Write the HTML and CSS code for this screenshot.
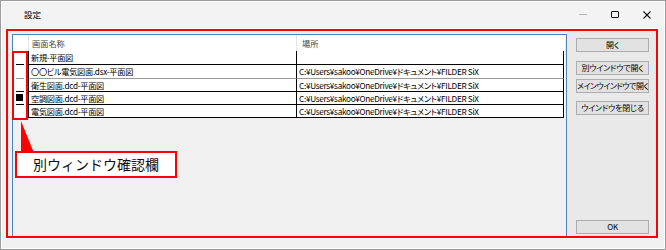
FILE: index.html
```html
<!DOCTYPE html>
<html lang="ja">
<head>
    <meta charset="UTF-8">
    <title>設定</title>
    <link rel="stylesheet" href="styles.css">
</head>
<body>

    <div class="window">
        <!-- Title bar -->
        <div class="titlebar">
            <span class="title">設定</span>
            <div class="controls">
                <span class="ctl min"></span>
                <span class="ctl max"></span>
                <svg class="ctl close" width="8" height="8" viewBox="0 0 8 8">
                    <path d="M0.5 0.5 L7.5 7.5 M7.5 0.5 L0.5 7.5" stroke="#111" stroke-width="1.1" fill="none"/>
                </svg>
            </div>
        </div>

        <!-- Dialog body (red annotation frame) -->
        <div class="frame">
            <div class="list">
                <div class="row head">
                    <div class="cell ind"></div>
                    <div class="cell">画面名称</div>
                    <div class="cell">場所</div>
                </div>
                <div class="row tall">
                    <div class="cell ind"><span class="dash"></span></div>
                    <div class="cell">新規-平面図</div>
                    <div class="cell"></div>
                </div>
                <div class="row tall soft">
                    <div class="cell ind"><span class="dash grey"></span></div>
                    <div class="cell">〇〇ビル電気図面.dsx-平面図</div>
                    <div class="cell">C:¥Users¥sakoo¥OneDrive¥ドキュメント¥FILDER SiX</div>
                </div>
                <div class="row">
                    <div class="cell ind"><span class="dash"></span></div>
                    <div class="cell">衛生図面.dcd-平面図</div>
                    <div class="cell">C:¥Users¥sakoo¥OneDrive¥ドキュメント¥FILDER SiX</div>
                </div>
                <div class="row">
                    <div class="cell ind"><span class="box"></span><span class="dash"></span></div>
                    <div class="cell">空調図面.dcd-平面図</div>
                    <div class="cell">C:¥Users¥sakoo¥OneDrive¥ドキュメント¥FILDER SiX</div>
                </div>
                <div class="row">
                    <div class="cell ind"></div>
                    <div class="cell">電気図面.dcd-平面図</div>
                    <div class="cell">C:¥Users¥sakoo¥OneDrive¥ドキュメント¥FILDER SiX</div>
                </div>
            </div>

            <div class="side">
                <button class="btn b1">開く</button>
                <button class="btn b2">別ウインドウで開く</button>
                <button class="btn b3">メインウインドウで開く</button>
                <button class="btn b4">ウインドウを閉じる</button>
                <button class="btn ok">OK</button>
            </div>
        </div>

        <!-- Annotations -->
        <div class="mark"></div>
        <svg class="pointer" width="14" height="32" viewBox="0 0 14 32">
            <polygon points="0,0 0,32 13,32" fill="#ff0000"/>
        </svg>
        <div class="callout">別ウィンドウ確認欄</div>
    </div>

</body>
</html>
```

FILE: styles.css
```css
* {
    margin: 0;
    padding: 0;
    box-sizing: border-box;
}

body {
    font-family: "Noto Sans CJK JP", "Noto Sans", sans-serif;
    background: #fff;
    color: #000;
}

.window {
    position: relative;
    width: 666px;
    height: 250px;
    background: #f0f0f0;
    border: 1px solid #9c9c9c;
    box-shadow: inset 1px 1px 0 #fff, inset -1px -1px 0 #fff;
    display: flex;
    flex-direction: column;
}

/* title bar */
.titlebar {
    height: 25px;
    display: flex;
    align-items: center;
    padding-left: 22px;
    background: #f3f3f3;
    margin: 1px 1px 0 1px;
}

.title {
    font-size: 8.5px;
    line-height: 1;
}

.controls {
    margin-left: auto;
    display: flex;
    align-items: center;
    gap: 24px;
    padding-right: 13px;
}

.ctl {
    display: block;
}

.min {
    width: 8px;
    height: 1px;
    background: #b5b5b5;
}

.max {
    width: 8px;
    height: 7px;
    border: 1px solid #111;
    border-radius: 1px;
}

/* red frame around the dialog body */
.frame {
    display: flex;
    margin: 2px 7px 0 5px;
    height: 209px;
    border: 2px solid #ff0000;
    outline: 1px solid #fff;
}

.list {
    width: 555px;
    margin: 3px 0 0 4px;
    border: 1px solid #4a84b8;
    border-bottom: none;
    background: #f0f0f0;
}

.row {
    display: grid;
    grid-template-columns: 15px 268px 268px;
    width: 552px;
    height: 13px;
    font-size: 8.2px;
    line-height: 12px;
    font-feature-settings: "palt";
    letter-spacing: -0.3px;
    background: #fff;
}

.row.tall {
    height: 14px;
}

.row .cell {
    border-left: 1px solid #000;
    border-bottom: 1px solid #000;
    padding-left: 2px;
    white-space: nowrap;
    overflow: hidden;
}

.row .cell:last-child {
    border-right: 1px solid #000;
}

.row.soft .cell {
    border-bottom-color: #9a9a9a;
}

/* indicator column: short tick on each row line */
.row .cell.ind {
    border: none;
    padding: 0 0 0 3px;
    display: flex;
    flex-direction: column;
    justify-content: flex-end;
    position: relative;
    background: #fff;
}

.row.head {
    height: 16px;
    line-height: 16px;
    color: #444;
    letter-spacing: 0;
}

.row.head .cell {
    border: none;
    border-left: 1px solid #e6e6e6;
}

.row.head .cell.ind {
    border: none;
}

.row.head .cell:nth-child(2) {
    padding-left: 3px;
}

.row.head .cell:last-child {
    padding-left: 5px;
}

.dash {
    display: block;
    width: 8px;
    height: 1px;
    flex: none;
    background: #000;
}

.dash.grey {
    background: #9a9a9a;
}

.box {
    position: absolute;
    left: 3px;
    top: 2px;
    width: 7px;
    height: 7px;
    background: #000;
}

/* button column */
.side {
    flex: 1;
    display: flex;
    flex-direction: column;
    padding: 7px 0 2px 9px;
    background: #e9e9e9;
}

.btn {
    width: 73px;
    height: 14px;
    font-family: "Noto Sans CJK JP", sans-serif;
    font-size: 8px;
    line-height: 12px;
    font-feature-settings: "palt";
    color: #000;
    background: #e1e1e1;
    border: 1px solid #adadad;
    white-space: nowrap;
    overflow: visible;
    letter-spacing: -0.2px;
}

.b2 {
    margin-top: 9px;
}

.b3 {
    margin-top: 4px;
    letter-spacing: -0.5px;
}

.b4 {
    margin-top: 8px;
}

.ok {
    margin-top: auto;
}

/* annotations */
.mark {
    position: absolute;
    left: 11px;
    top: 50px;
    width: 16px;
    height: 69px;
    border: 2px solid #ff0000;
}

.pointer {
    position: absolute;
    left: 20px;
    top: 120px;
}

.callout {
    position: absolute;
    left: 14px;
    top: 150px;
    width: 162px;
    height: 27px;
    padding-left: 16px;
    background: #fff;
    border: 2px solid #ff0000;
    font-size: 14px;
    line-height: 23px;
    color: #111;
}
```
